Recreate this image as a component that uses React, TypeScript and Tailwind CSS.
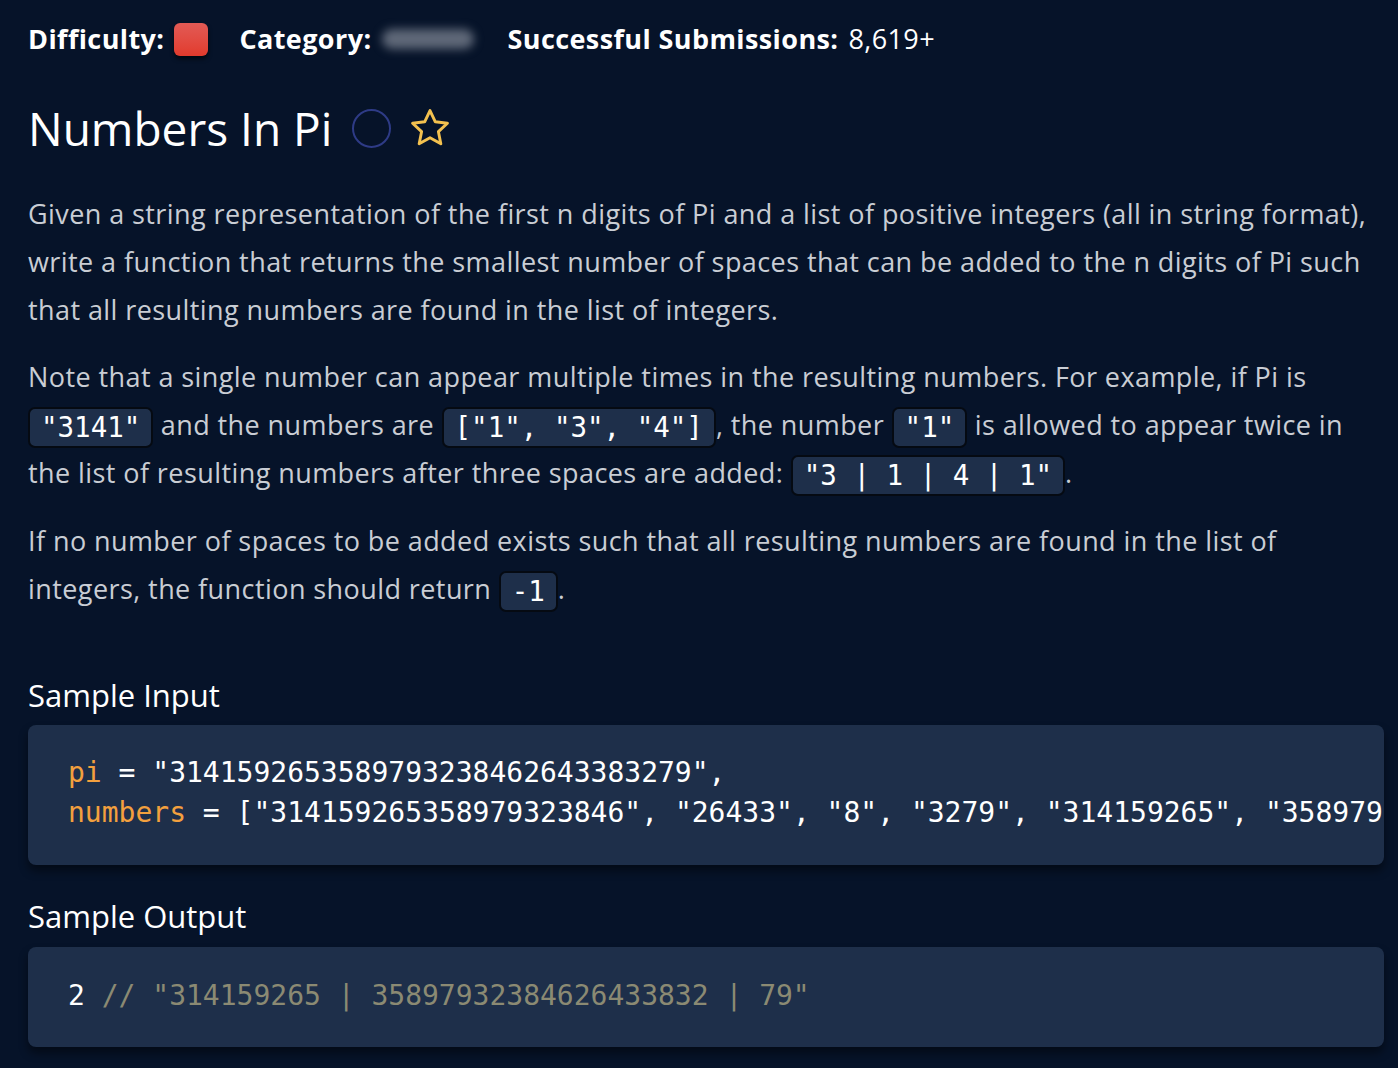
import React from "react";

const Code = ({ children }: { children: React.ReactNode }) => (
  <code className="inline-block rounded-[7px] border-2 border-[#050a12] bg-[#1e2f4a] px-[11px] align-middle font-['DejaVu_Sans_Mono',monospace] text-[27.5px] leading-[37px] tracking-normal text-white whitespace-pre">
    {children}
  </code>
);

export default function App() {
  return (
    <div className="min-h-[1068px] w-full bg-[#061329] pl-[28px] pr-[14px] pt-[19px] font-['Open_Sans','Noto_Sans',sans-serif] text-[#c9cdd4]">
      {/* header */}
      <div className="flex h-[40px] items-center text-[27px] tracking-[0.4px] text-white">
        <span className="font-bold">Difficulty:</span>
        <span className="ml-[10px] h-[33px] w-[34px] rounded-[6px] bg-gradient-to-b from-[#e25a55] to-[#e23a2c] shadow-[0_3px_4px_rgba(0,0,0,0.6)]" />
        <span className="ml-[31px] font-bold">Category:</span>
        <span className="ml-[10px] h-[20px] w-[92px] rounded-full bg-[#5f6878] blur-[5px]" />
        <span className="ml-[34px] font-bold">Successful Submissions:</span>
        <span className="ml-[10px]">8,619+</span>
      </div>

      {/* title */}
      <div className="mt-[41px] flex h-[56px] items-center">
        <h1 className="text-[46px] font-medium leading-[56px] text-white">Numbers In Pi</h1>
        <span className="ml-[20px] h-[39px] w-[39px] rounded-full border-2 border-[#2e3b86]" />
        <svg className="ml-[17px]" width="44" height="44" viewBox="0 0 24 24" fill="none" stroke="#f3c14f" strokeWidth="1.6" strokeLinejoin="round">
          <path d="M12 2.5l2.9 6.1 6.6.8-4.9 4.6 1.3 6.6L12 17.3l-5.9 3.3 1.3-6.6-4.9-4.6 6.6-.8z" />
        </svg>
      </div>

      {/* description */}
      <div className="text-[27px] leading-[48px] tracking-[0.42px]">
        <p className="mt-[34px] whitespace-nowrap">
          Given a string representation of the first n digits of Pi and a list of positive integers (all in string format),
          <br />
          write a function that returns the smallest number of spaces that can be added to the n digits of Pi such
          <br />
          that all resulting numbers are found in the list of integers.
        </p>
        <p className="mt-[19px] whitespace-nowrap">
          Note that a single number can appear multiple times in the resulting numbers. For example, if Pi is
          <br />
          <Code>"3141"</Code> and the numbers are <Code>["1", "3", "4"]</Code>, the number <Code>"1"</Code> is allowed to appear twice in
          <br />
          the list of resulting numbers after three spaces are added: <Code>"3 | 1 | 4 | 1"</Code>.
        </p>
        <p className="mt-[20px] whitespace-nowrap">
          If no number of spaces to be added exists such that all resulting numbers are found in the list of
          <br />
          integers, the function should return <Code>-1</Code>.
        </p>
      </div>

      {/* sample input */}
      <h2 className="mt-[62px] text-[31px] font-medium leading-[40px] text-white">Sample Input</h2>
      <div className="mt-[10px] overflow-hidden rounded-[8px] bg-[#1e2f4a] pb-[32px] pl-[40px] pt-[28px] font-['DejaVu_Sans_Mono',monospace] text-[28px] leading-[40px] text-white shadow-[0_6px_10px_rgba(0,0,0,0.45)]">
        <div className="whitespace-pre">
          <span className="text-[#f3a03e]">pi</span> = "3141592653589793238462643383279",
        </div>
        <div className="whitespace-pre">
          <span className="text-[#f3a03e]">numbers</span> = ["314159265358979323846", "26433", "8", "3279", "314159265", "35897932384626433832", "79"]
        </div>
      </div>

      {/* sample output */}
      <h2 className="mt-[31px] text-[31px] font-medium leading-[40px] text-white">Sample Output</h2>
      <div className="mt-[11px] overflow-hidden rounded-[8px] bg-[#1e2f4a] pb-[31px] pl-[40px] pt-[29px] font-['DejaVu_Sans_Mono',monospace] text-[28px] leading-[40px] text-white shadow-[0_6px_10px_rgba(0,0,0,0.45)]">
        <div className="whitespace-pre">
          2 <span className="text-[#8b8a73]">// "314159265 | 35897932384626433832 | 79"</span>
        </div>
      </div>
    </div>
  );
}
